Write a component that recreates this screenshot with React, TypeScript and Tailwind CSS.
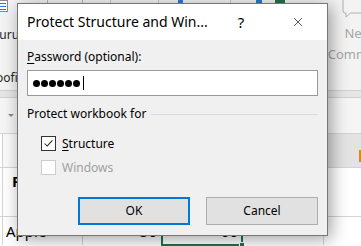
import { X } from "lucide-react";

function Check() {
  return (
    <svg viewBox="0 0 15 15" className="h-[15px] w-[15px]" aria-hidden="true">
      <path d="M3 7.5 L6 10.5 L12 4" fill="none" stroke="#222" strokeWidth="1.2" />
    </svg>
  );
}

function Dialog() {
  return (
    <div className="absolute left-[17px] top-[3px] flex h-[233px] w-[311px] flex-col border border-[#767676] bg-[#f0f0f0] shadow-[3px_3px_16px_rgba(0,0,0,0.38)]">
      <div className="flex h-[36px] items-center bg-white text-[14px] text-black">
        <span className="flex-1 pl-[9px] leading-[20px]">Protect Structure and Win...</span>
        <span className="w-[28px] text-center text-[15px] leading-[20px]">?</span>
        <span className="ml-[14px] flex w-[58px] justify-center">
          <X className="h-[14px] w-[14px]" strokeWidth={1.1} aria-hidden="true" />
        </span>
      </div>
      <div className="flex flex-1 flex-col px-[9px] text-[12px] leading-[16px] text-black">
        <label className="mt-[9px]">
          <span className="underline underline-offset-2">P</span>assword (optional):
        </label>
        <div className="mt-[5px] flex h-[26px] items-center gap-[1px] border border-[#9a9a9a] bg-white pl-[5px]">
          <span className="h-[7px] w-[7px] rounded-full bg-black" />
          <span className="h-[7px] w-[7px] rounded-full bg-black" />
          <span className="h-[7px] w-[7px] rounded-full bg-black" />
          <span className="h-[7px] w-[7px] rounded-full bg-black" />
          <span className="h-[7px] w-[7px] rounded-full bg-black" />
          <span className="h-[7px] w-[7px] rounded-full bg-black" />
          <span className="ml-[2px] h-[14px] w-px bg-black" />
        </div>
        <div className="mt-[10px] flex items-center gap-[5px]">
          <span>Protect workbook for</span>
          <span className="h-px flex-1 bg-[#dcdcdc]" />
        </div>
        <div className="ml-[14px] mt-[14px] flex h-[15px] items-center gap-[6px]">
          <span className="flex h-[15px] w-[15px] items-center justify-center border border-[#333] bg-white">
            <Check />
          </span>
          <span>
            <span className="underline underline-offset-2">S</span>tructure
          </span>
        </div>
        <div className="ml-[14px] mt-[9px] flex h-[15px] items-center gap-[6px] text-[#a0a0a0]">
          <span className="h-[15px] w-[15px] border border-[#cccccc] bg-white" />
          <span>Windows</span>
        </div>
        <div className="mt-[22px] flex justify-end gap-[16px]">
          <button className="flex h-[28px] w-[112px] items-center justify-center border-2 border-[#0078d7] bg-[#e1e1e1]">
            OK
          </button>
          <button className="flex h-[28px] w-[112px] items-center justify-center border border-[#adadad] bg-[#e1e1e1]">
            Cancel
          </button>
        </div>
      </div>
    </div>
  );
}

export default function App() {
  return (
    <div className="relative h-[246px] w-[361px] overflow-hidden bg-white font-['Noto_Sans',sans-serif]">
      {/* ribbon */}
      <div className="flex h-[90px] bg-[#f3f3f3]">
        <div className="flex w-[17px] flex-col text-[12px] leading-[16px] text-[#262626]">
          <div className="ml-[-3px] flex h-[12px] w-[11px] flex-col gap-[2px] border border-[#8a8a8a] bg-white px-[1px] pt-[2px]">
            <span className="h-px bg-[#2b79d0]" />
            <span className="h-px bg-[#2b79d0]" />
            <span className="h-px bg-[#2b79d0]" />
          </div>
          <span className="ml-[-34px] mt-[15px] whitespace-nowrap">Thesaurus</span>
          <span className="ml-[-16px] mt-[27px] whitespace-nowrap">Proofing</span>
        </div>
        <div className="flex h-[3px] flex-1">
          <span className="ml-[30px] w-px bg-[#b5b5b5]" />
          <span className="ml-[34px] w-px bg-[#b5b5b5]" />
          <span className="ml-[27px] w-px bg-[#c8c8c8]" />
          <span className="ml-[47px] w-px bg-[#c8c8c8]" />
          <span className="ml-[19px] w-[5px] bg-[#2b79d0]" />
          <span className="ml-[47px] w-px bg-[#c8c8c8]" />
          <span className="ml-[25px] w-[6px] bg-[#2b79d0]" />
          <span className="ml-[13px] w-[10px] bg-[#217346]" />
        </div>
        <div className="mr-[-37px] flex w-[80px] flex-col items-center text-[13px] leading-[21px] text-[#a6a6a6]">
          <svg viewBox="0 0 32 18" className="h-[18px] w-[32px]" aria-hidden="true">
            <path d="M1 0 V11 Q1 13 3 13 H4 V17 L8.5 13 H29 Q31 13 31 11 V0" fill="none" stroke="#b0b0b0" />
          </svg>
          <span className="mt-[5px]">New</span>
          <span>Comment</span>
        </div>
      </div>

      {/* sheet */}
      <div className="h-[8px] border-y border-[#d0d0d0] bg-[#e6e6e6]" />
      <div className="flex h-[35px] items-center bg-[#f5f5f5] pl-[8px]">
        <svg viewBox="0 0 6 3" className="h-[3px] w-[6px]" aria-hidden="true">
          <path d="M0 0 H6 L3 3 Z" fill="#8a8a8a" />
        </svg>
      </div>
      <div className="flex h-[35px] border-y border-[#d4d4d4]">
        <div className="w-[3px] border-r border-[#d4d4d4] bg-white" />
        <div className="w-[14px] bg-[#fafafa]" />
        <div className="flex flex-1 items-start justify-end bg-[#e3e3e3] pt-[16px]">
          <span className="h-[12px] w-[2px] bg-[#d98a1f]" />
        </div>
      </div>
      <div className="flex h-[49px] border-b border-[#d4d4d4] text-[15px] leading-[20px] text-black">
        <div className="w-[3px] border-r border-[#d4d4d4]" />
        <div className="pl-[9px] pt-[3px] font-bold">Fruit</div>
      </div>
      <div className="flex h-[28px] text-[15px] leading-[20px] text-black">
        <div className="w-[3px] border-r border-[#d4d4d4]" />
        <div className="w-[80px] border-r border-[#d4d4d4] pl-[3px] pt-[4px]">Apple</div>
        <div className="w-[79px] border-r border-[#d4d4d4] pr-[4px] pt-[4px] text-right">50</div>
        <div className="relative w-[81px] border-r border-[#d4d4d4] pr-[4px] pt-[4px] text-right">
          60
          <span className="absolute inset-[-1px] border-2 border-[#217346]" />
          <span className="absolute bottom-[-3px] right-[-3px] h-[6px] w-[6px] border border-white bg-[#217346]" />
        </div>
        <div className="w-[81px] border-r border-[#d4d4d4]" />
      </div>

      <Dialog />
    </div>
  );
}
